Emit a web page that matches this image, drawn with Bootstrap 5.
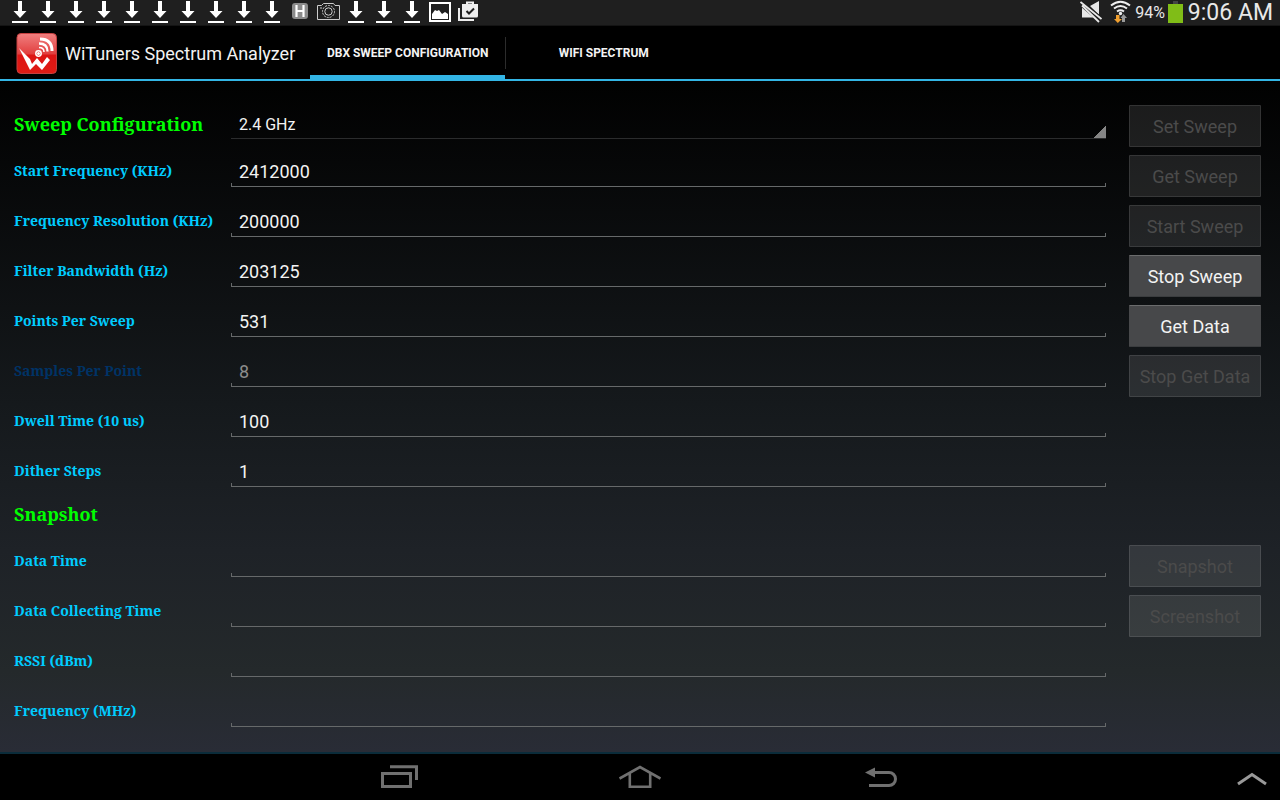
<!DOCTYPE html>
<html lang="en">
<head>
<meta charset="utf-8">
<meta name="viewport" content="width=device-width, initial-scale=1">
<title>WiTuners Spectrum Analyzer</title>
<link rel="stylesheet" href="https://cdn.jsdelivr.net/npm/bootstrap@5.3.0/dist/css/bootstrap.min.css">
<style>
  body { font-family: Roboto, sans-serif; font-size: 18px; line-height: 24px; background: #000; color: #f3f3f3; }
  .status-bar { height: 26px; background: #1f1f1f; border-bottom: 1px solid #141414; color: #e8e8e8; padding: 0 7px 0 6px; }
  .status-bar svg { flex: none; }
  .battery-text { font-size: 16px; margin: 0 3px; }
  .clock { font-size: 23px; }
  .app-bar { min-height: 55px; border-bottom: 2px solid #33b5e5; }
  .brand { padding: 2px 15px 0 16px; }
  .tab-link { width: 195px; margin-bottom: -2px; font-size: 12px; font-weight: 700; line-height: 16px; color: #f3f3f3; text-decoration: none; border-bottom: 6px solid transparent; padding-top: 5px; }
  .tab-link.active { border-bottom-color: #33b5e5; }
  .tab-divider { width: 1px; height: 32px; background: #2c2c2c; }
  .config-page { padding: 24px 19px 0 14px; background: linear-gradient(#010101, #15191c 48%, #1e2227 70%, #24292b 88%, #292c36); }
  .section-body { gap: 23px; }
  .field-label, .section-title { width: 217px; flex: none; font-family: "Droid Serif", "Noto Serif", "DejaVu Serif Condensed", "DejaVu Serif", serif; font-weight: 700; white-space: nowrap; margin: 0; }
  .section-title { font-size: 18px; line-height: 24px; color: #0f0; padding-top: 4px; }
  .field-label { font-size: 14px; line-height: 20px; color: #0cf; padding-bottom: 6px; }
  .field-label.dimmed { color: #003366; }
  .title-row { height: 34px; }
  .snapshot-row { height: 40px; padding-top: 9px; }
  .field-row { height: 50px; padding-bottom: 2px; }
  .line-input { height: 30px; min-width: 0; border: 0; border-radius: 0; padding: 0 8px 2px; outline: 0; color: #f3f3f3;
    background: linear-gradient(#66696a, #66696a) left bottom / 100% 1px no-repeat,
      linear-gradient(#66696a, #66696a) left bottom / 1px 4px no-repeat,
      linear-gradient(#66696a, #66696a) right bottom / 1px 4px no-repeat; }
  .line-input:disabled { color: #8c8c8c; opacity: 1; }
  .band-select { height: 34px; min-width: 0; appearance: none; border: 0; border-bottom: 1px solid #2b2c2d; border-radius: 0; outline: 0; padding: 7px 8px 0; font-size: 16px; color: #f3f3f3;
    background: linear-gradient(135deg, transparent 50%, #858585 50%) right bottom / 12px 12px no-repeat; }
  .band-select option { color: #000; }
  .action-stack { width: 132px; flex: none; gap: 8px; }
  .snapshot-actions { padding-top: 56px; }
  .action-btn { height: 42px; padding: 2px 0 0; border: 1px solid; border-color: #6b6c6d #48494b #3b3d3f; border-radius: 1px; background: #47484a; color: #f3f3f3; font-size: 18px; white-space: nowrap; }
  .action-btn:disabled { background: rgba(255,255,255,.1); border-color: rgba(255,255,255,.1); color: #4b4b4b; }
  .system-bar { height: 48px; border-top: 2px solid #0b2c3a; background: #000; display: grid; grid-template-columns: 1fr auto 1fr; padding-bottom: 2px; }
  .system-keys { gap: 121px; grid-column: 2; }
  .key-btn { width: 120px; border: 0; padding: 0; background: none; }
  .expand-btn { width: 44px; border: 0; padding: 0; background: none; margin-right: 6px; }
</style>
</head>
<body class="d-flex flex-column min-vh-100">

<svg class="d-none" aria-hidden="true">
  <symbol id="download" viewBox="0 0 28 25"><path fill="#fff" d="M12 1h4v10h4.500L14 18 7.500 11H12zM6 21h16v2H6z"/></symbol>
</svg>

<div class="status-bar d-flex align-items-center justify-content-between">
  <div class="d-flex">
    <svg width="28" height="25"><use href="#download"/></svg>
    <svg width="28" height="25"><use href="#download"/></svg>
    <svg width="28" height="25"><use href="#download"/></svg>
    <svg width="28" height="25"><use href="#download"/></svg>
    <svg width="28" height="25"><use href="#download"/></svg>
    <svg width="28" height="25"><use href="#download"/></svg>
    <svg width="28" height="25"><use href="#download"/></svg>
    <svg width="28" height="25"><use href="#download"/></svg>
    <svg width="28" height="25"><use href="#download"/></svg>
    <svg width="28" height="25"><use href="#download"/></svg>
    <svg width="28" height="25" viewBox="0 0 28 25"><rect x="6" y="3" width="16" height="16" rx="3" fill="#8c8c8c"/><path d="M10.500 5v12M17.500 5v12M10 11h8" stroke="#fff" stroke-width="2.200" fill="none"/></svg>
    <svg width="28" height="25" viewBox="0 0 28 25" fill="none" stroke="#ccc"><path d="M3.500 19.500v-14h4l2-2h10l1.500 2h4.500v14z"/><circle cx="14.500" cy="11.500" r="6" stroke-dasharray="2 1"/><circle cx="14.500" cy="11.500" r="3.700"/><path d="M6 8h2"/></svg>
    <svg width="28" height="25"><use href="#download"/></svg>
    <svg width="28" height="25"><use href="#download"/></svg>
    <svg width="28" height="25"><use href="#download"/></svg>
    <svg width="28" height="25" viewBox="0 0 28 25"><path d="M4 3h20v18H4z" fill="none" stroke="#fff" stroke-width="2"/><path fill="#fff" d="M6 19v-5l3-4 2 1 2-1 3 4 3-2 3 2v5z"/></svg>
    <svg width="28" height="25" viewBox="0 0 28 25"><path d="M5 8v12h15" fill="none" stroke="#eee" stroke-width="2"/><path fill="#eee" d="M8 4h16v12q0 1.500-1.500 1.500h-13Q8 17.500 8 16z"/><path d="M13 4.500V2.500h6v2" fill="none" stroke="#eee" stroke-width="2"/><path d="M12.500 11l2.500 2.500 5-5" fill="none" stroke="#1f1f1f" stroke-width="2"/></svg>
  </div>
  <div class="d-flex align-items-center">
    <svg class="me-2" width="22" height="25" viewBox="0 0 22 25"><path fill="#e8e8e8" d="M2 7h4l11 10.500H2zM10 6l9-5v14z"/><path d="M1 3l21 18" stroke="#1f1f1f" stroke-width="6"/><path d="M.5 2L21.500 19M2 5.500l17 16.500" stroke="#e8e8e8" stroke-width="1.800"/></svg>
    <svg width="22" height="25" viewBox="0 0 22 25"><g fill="none" stroke="#eee" stroke-width="2"><path d="M1 5.500q9.500-7.500 19 0M4 8.500q6.500-5 13 0M7 11.500q3.500-2.500 7 0"/></g><circle cx="10.500" cy="13.500" r="1.700" fill="#eee"/><path fill="#f0a030" d="M6 15h3.500v4H12l-4.200 4L4 19h2z"/><path fill="#999" d="M12 22v-4h-1.500l3-4 3.500 4h-2v4z"/></svg>
    <span class="battery-text">94%</span>
    <svg class="me-1" width="16" height="25" viewBox="0 0 16 25"><path fill="#444" d="M5 1h5v3H5z"/><path fill="#80bd17" d="M0 4h15v19H0z"/></svg>
    <span class="clock">9:06 AM</span>
  </div>
</div>

<header class="app-bar d-flex">
  <div class="brand d-flex align-items-center gap-2">
    <svg width="41" height="41" viewBox="0 0 41 41" role="img" aria-label="WiTuners logo">
      <defs><linearGradient id="badgeRed" x2="0" y2="1"><stop stop-color="#f08080"/><stop offset=".5" stop-color="#e24040"/><stop offset=".55" stop-color="#dc1414"/><stop offset="1" stop-color="#e01c14"/></linearGradient></defs>
      <rect x="1" y=".5" width="39.500" height="40" rx="4" fill="url(#badgeRed)" stroke="#c54040"/>
      <path fill="#fff" d="M3 15l11 11 2 5 5-6 5 6 5-7 3 3-8 10-6-6-6 6z"/>
      <circle cx="22.500" cy="20.500" r="2.700" fill="none" stroke="#fff" stroke-width="1.500"/><circle cx="22.500" cy="20.500" r="1.500" fill="#fff"/>
      <g fill="none" stroke="#fff"><path stroke-width="3" d="M24 6q12 0 12 12"/><path stroke-width="2.300" d="M23 10.500q8.500 0 8.500 8"/><path stroke-width="1.500" d="M23 14.500q5 0 5 4.500"/></g>
    </svg>
    <span class="text-nowrap">WiTuners Spectrum Analyzer</span>
  </div>
  <nav class="d-flex" aria-label="Views">
    <a class="tab-link active d-flex align-items-center justify-content-center" href="#sweep" aria-current="page">DBX SWEEP CONFIGURATION</a>
    <span class="tab-divider align-self-center"></span>
    <a class="tab-link d-flex align-items-center justify-content-center" href="#wifi">WIFI SPECTRUM</a>
  </nav>
</header>

<main class="config-page flex-grow-1" id="sweep">
  <section class="section-body d-flex align-items-start">
    <div class="flex-grow-1">
      <div class="title-row d-flex align-items-center">
        <h1 class="section-title">Sweep Configuration</h1>
        <select class="band-select flex-grow-1" aria-label="Band"><option>2.4 GHz</option><option>5 GHz</option></select>
      </div>
      <div class="field-row d-flex align-items-end"><label class="field-label" for="start">Start Frequency (KHz)</label><input class="line-input flex-grow-1" id="start" type="text" value="2412000"></div>
      <div class="field-row d-flex align-items-end"><label class="field-label" for="resolution">Frequency Resolution (KHz)</label><input class="line-input flex-grow-1" id="resolution" type="text" value="200000"></div>
      <div class="field-row d-flex align-items-end"><label class="field-label" for="bandwidth">Filter Bandwidth (Hz)</label><input class="line-input flex-grow-1" id="bandwidth" type="text" value="203125"></div>
      <div class="field-row d-flex align-items-end"><label class="field-label" for="points">Points Per Sweep</label><input class="line-input flex-grow-1" id="points" type="text" value="531"></div>
      <div class="field-row d-flex align-items-end"><label class="field-label dimmed" for="samples">Samples Per Point</label><input class="line-input flex-grow-1" id="samples" type="text" value="8" disabled></div>
      <div class="field-row d-flex align-items-end"><label class="field-label" for="dwell">Dwell Time (10 us)</label><input class="line-input flex-grow-1" id="dwell" type="text" value="100"></div>
      <div class="field-row d-flex align-items-end"><label class="field-label" for="dither">Dither Steps</label><input class="line-input flex-grow-1" id="dither" type="text" value="1"></div>
    </div>
    <div class="action-stack d-flex flex-column">
      <button class="action-btn" type="button" disabled>Set Sweep</button>
      <button class="action-btn" type="button" disabled>Get Sweep</button>
      <button class="action-btn" type="button" disabled>Start Sweep</button>
      <button class="action-btn" type="button">Stop Sweep</button>
      <button class="action-btn" type="button">Get Data</button>
      <button class="action-btn" type="button" disabled>Stop Get Data</button>
    </div>
  </section>

  <section class="section-body d-flex align-items-start">
    <div class="flex-grow-1">
      <div class="snapshot-row"><h2 class="section-title">Snapshot</h2></div>
      <div class="field-row d-flex align-items-end"><label class="field-label" for="data-time">Data Time</label><input class="line-input flex-grow-1" id="data-time" type="text"></div>
      <div class="field-row d-flex align-items-end"><label class="field-label" for="collect-time">Data Collecting Time</label><input class="line-input flex-grow-1" id="collect-time" type="text"></div>
      <div class="field-row d-flex align-items-end"><label class="field-label" for="rssi">RSSI (dBm)</label><input class="line-input flex-grow-1" id="rssi" type="text"></div>
      <div class="field-row d-flex align-items-end"><label class="field-label" for="frequency">Frequency (MHz)</label><input class="line-input flex-grow-1" id="frequency" type="text"></div>
    </div>
    <div class="action-stack snapshot-actions d-flex flex-column">
      <button class="action-btn" type="button" disabled>Snapshot</button>
      <button class="action-btn" type="button" disabled>Screenshot</button>
    </div>
  </section>
</main>

<footer class="system-bar">
  <div class="system-keys d-flex">
    <button class="key-btn" type="button" aria-label="Recent apps"><svg width="38" height="24" viewBox="0 0 38 24" fill="none" stroke="#707070" stroke-width="3"><path d="M2.500 8.500h28v13h-28zM10 1.800h26.500V15"/></svg></button>
    <button class="key-btn" type="button" aria-label="Home"><svg width="42" height="24" viewBox="0 0 42 24" fill="none" stroke="#707070" stroke-width="2.600"><path d="M.5 13.500L21 2l20.500 11.500M10.800 8v13.700h20.400V8"/></svg></button>
    <button class="key-btn" type="button" aria-label="Back"><svg width="34" height="24" viewBox="0 0 34 24"><path d="M10 7.500h15a6.500 6.500 0 0 1 0 13H5" fill="none" stroke="#707070" stroke-width="3"/><path fill="#707070" d="M1 7.500L11 2.500v10z"/></svg></button>
  </div>
  <button class="expand-btn ms-auto" type="button" aria-label="Expand"><svg width="30" height="24" viewBox="0 0 30 24" fill="none" stroke="#999" stroke-width="3"><path d="M1 19L15 9.500 29 19"/></svg></button>
</footer>

<script src="https://cdn.jsdelivr.net/npm/bootstrap@5.3.0/dist/js/bootstrap.bundle.min.js"></script>
</body>
</html>
